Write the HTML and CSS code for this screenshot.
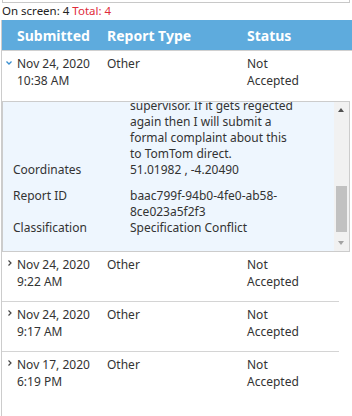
FILE: index.html
```html
<!DOCTYPE html>
<html>
<head>
<meta name="viewport" content="width=device-width, initial-scale=1">
<link rel="stylesheet" href="styles.css">
</head>
<body>

<div class="searchbox"></div>

<div class="counts">On screen: 4 <span class="total">Total: 4</span></div>

<div class="reports">
  <div class="head">
    <div class="col-date">Submitted</div>
    <div class="col-type">Report Type</div>
    <div class="col-status">Status</div>
  </div>

  <!-- open row -->
  <div class="row open">
    <svg class="toggle" width="6" height="4" viewBox="0 0 6 4"><polyline points="0.5,0.5 3,3 5.5,0.5" fill="none" stroke="#3a8fd0" stroke-width="1.3"/></svg>
    <div class="col-date">Nov 24, 2020<br>10:38 AM</div>
    <div class="col-type">Other</div>
    <div class="col-status">Not<br>Accepted</div>
  </div>
  <div class="details">
    <div class="details-inner">
      <div class="details-scroll">
        <div class="line"><span class="label"></span><span class="value">supervisor. If it gets regected</span></div>
        <div class="line"><span class="label"></span><span class="value">again then I will submit a</span></div>
        <div class="line"><span class="label"></span><span class="value">formal complaint about this</span></div>
        <div class="line"><span class="label"></span><span class="value">to TomTom direct.</span></div>
        <div class="line gap"><span class="label">Coordinates</span><span class="value">51.01982 , -4.20490</span></div>
        <div class="line"><span class="label">Report ID</span><span class="value">baac799f-94b0-4fe0-ab58-<br>8ce023a5f2f3</span></div>
        <div class="line"><span class="label">Classification</span><span class="value">Specification Conflict</span></div>
      </div>
    </div>
    <div class="scrollbar">
      <span class="arrow up"></span>
      <span class="track"><span class="thumb"></span></span>
      <span class="arrow down"></span>
    </div>
  </div>

  <div class="row">
    <svg class="toggle closed" width="4" height="6" viewBox="0 0 4 6"><polyline points="0.5,0.5 3,3 0.5,5.5" fill="none" stroke="#444" stroke-width="1.2"/></svg>
    <div class="col-date">Nov 24, 2020<br>9:22 AM</div>
    <div class="col-type">Other</div>
    <div class="col-status">Not<br>Accepted</div>
  </div>
  <div class="row">
    <svg class="toggle closed" width="4" height="6" viewBox="0 0 4 6"><polyline points="0.5,0.5 3,3 0.5,5.5" fill="none" stroke="#444" stroke-width="1.2"/></svg>
    <div class="col-date">Nov 24, 2020<br>9:17 AM</div>
    <div class="col-type">Other</div>
    <div class="col-status">Not<br>Accepted</div>
  </div>
  <div class="row last">
    <svg class="toggle closed" width="4" height="6" viewBox="0 0 4 6"><polyline points="0.5,0.5 3,3 0.5,5.5" fill="none" stroke="#444" stroke-width="1.2"/></svg>
    <div class="col-date">Nov 17, 2020<br>6:19 PM</div>
    <div class="col-type">Other</div>
    <div class="col-status">Not<br>Accepted</div>
  </div>
</div>

</body>
</html>
```

FILE: styles.css
```css
body {
  margin: 0;
  padding: 0 0 0 2px;
  font-family: "Noto Sans", "Open Sans", sans-serif;
  font-size: 12px;
  color: #333;
  overflow: hidden;
}

.searchbox {
  width: 346px;
  height: 2px;
  border: 1px solid #c8c8c8;
  border-top: none;
}

.counts {
  font-size: 11.5px;
  line-height: 16px;
  height: 17px;
  color: #222;
}

.total {
  color: #e02b3a;
}

.reports {
  border-left: 1px solid #ccc;
  margin-left: -1px;
  min-height: 400px;
}

.head {
  display: flex;
  height: 30px;
  align-items: center;
  background: #5eabdd;
  color: #fff;
  font-weight: bold;
  font-size: 14px;
  border-bottom: 1px solid #d0d0d0;
}

.col-date {
  flex: none;
  width: 90px;
  padding-left: 15px;
}

.col-type {
  flex: none;
  width: 140px;
}

.col-status {
  flex: none;
  width: 90px;
}

.row {
  position: relative;
  display: flex;
  box-sizing: border-box;
  height: 50px;
  padding-top: 4px;
  line-height: 17px;
  border-bottom: 1px solid #d4d4d4;
  width: 337px;
}

.row.open,
.row.last {
  border-bottom: none;
}

.toggle {
  position: absolute;
  left: 4px;
  top: 10px;
}

.toggle.closed {
  left: 6px;
  top: 8px;
}

.details {
  display: flex;
  width: 348px;
  height: 151px;
  border: 1px solid #ccc;
  background: #eef6fe;
  box-sizing: border-box;
}

.details-inner {
  flex: 1;
  overflow: hidden;
}

.details-scroll {
  margin-top: -4px;
  padding-left: 10px;
}

.line {
  display: flex;
  line-height: 16px;
}

.line.gap {
  margin-bottom: 10px;
}

.line .label {
  width: 117px;
  flex: none;
}

.scrollbar {
  width: 15px;
  background: #f1f1f1;
  display: flex;
  flex-direction: column;
}

.arrow {
  height: 15px;
  width: 15px;
  position: relative;
}

.arrow::after {
  content: "";
  position: absolute;
  left: 4px;
  border-left: 3.5px solid transparent;
  border-right: 3.5px solid transparent;
}

.arrow.up::after {
  top: 6px;
  border-bottom: 4px solid #505050;
}

.arrow.down::after {
  top: 5px;
  border-top: 4px solid #a3a3a3;
}

.track {
  flex: 1;
  display: flex;
  flex-direction: column;
  justify-content: flex-end;
}

.thumb {
  display: block;
  margin: 0 2px 4px;
  height: 46px;
  background: #c1c1c1;
}
```
